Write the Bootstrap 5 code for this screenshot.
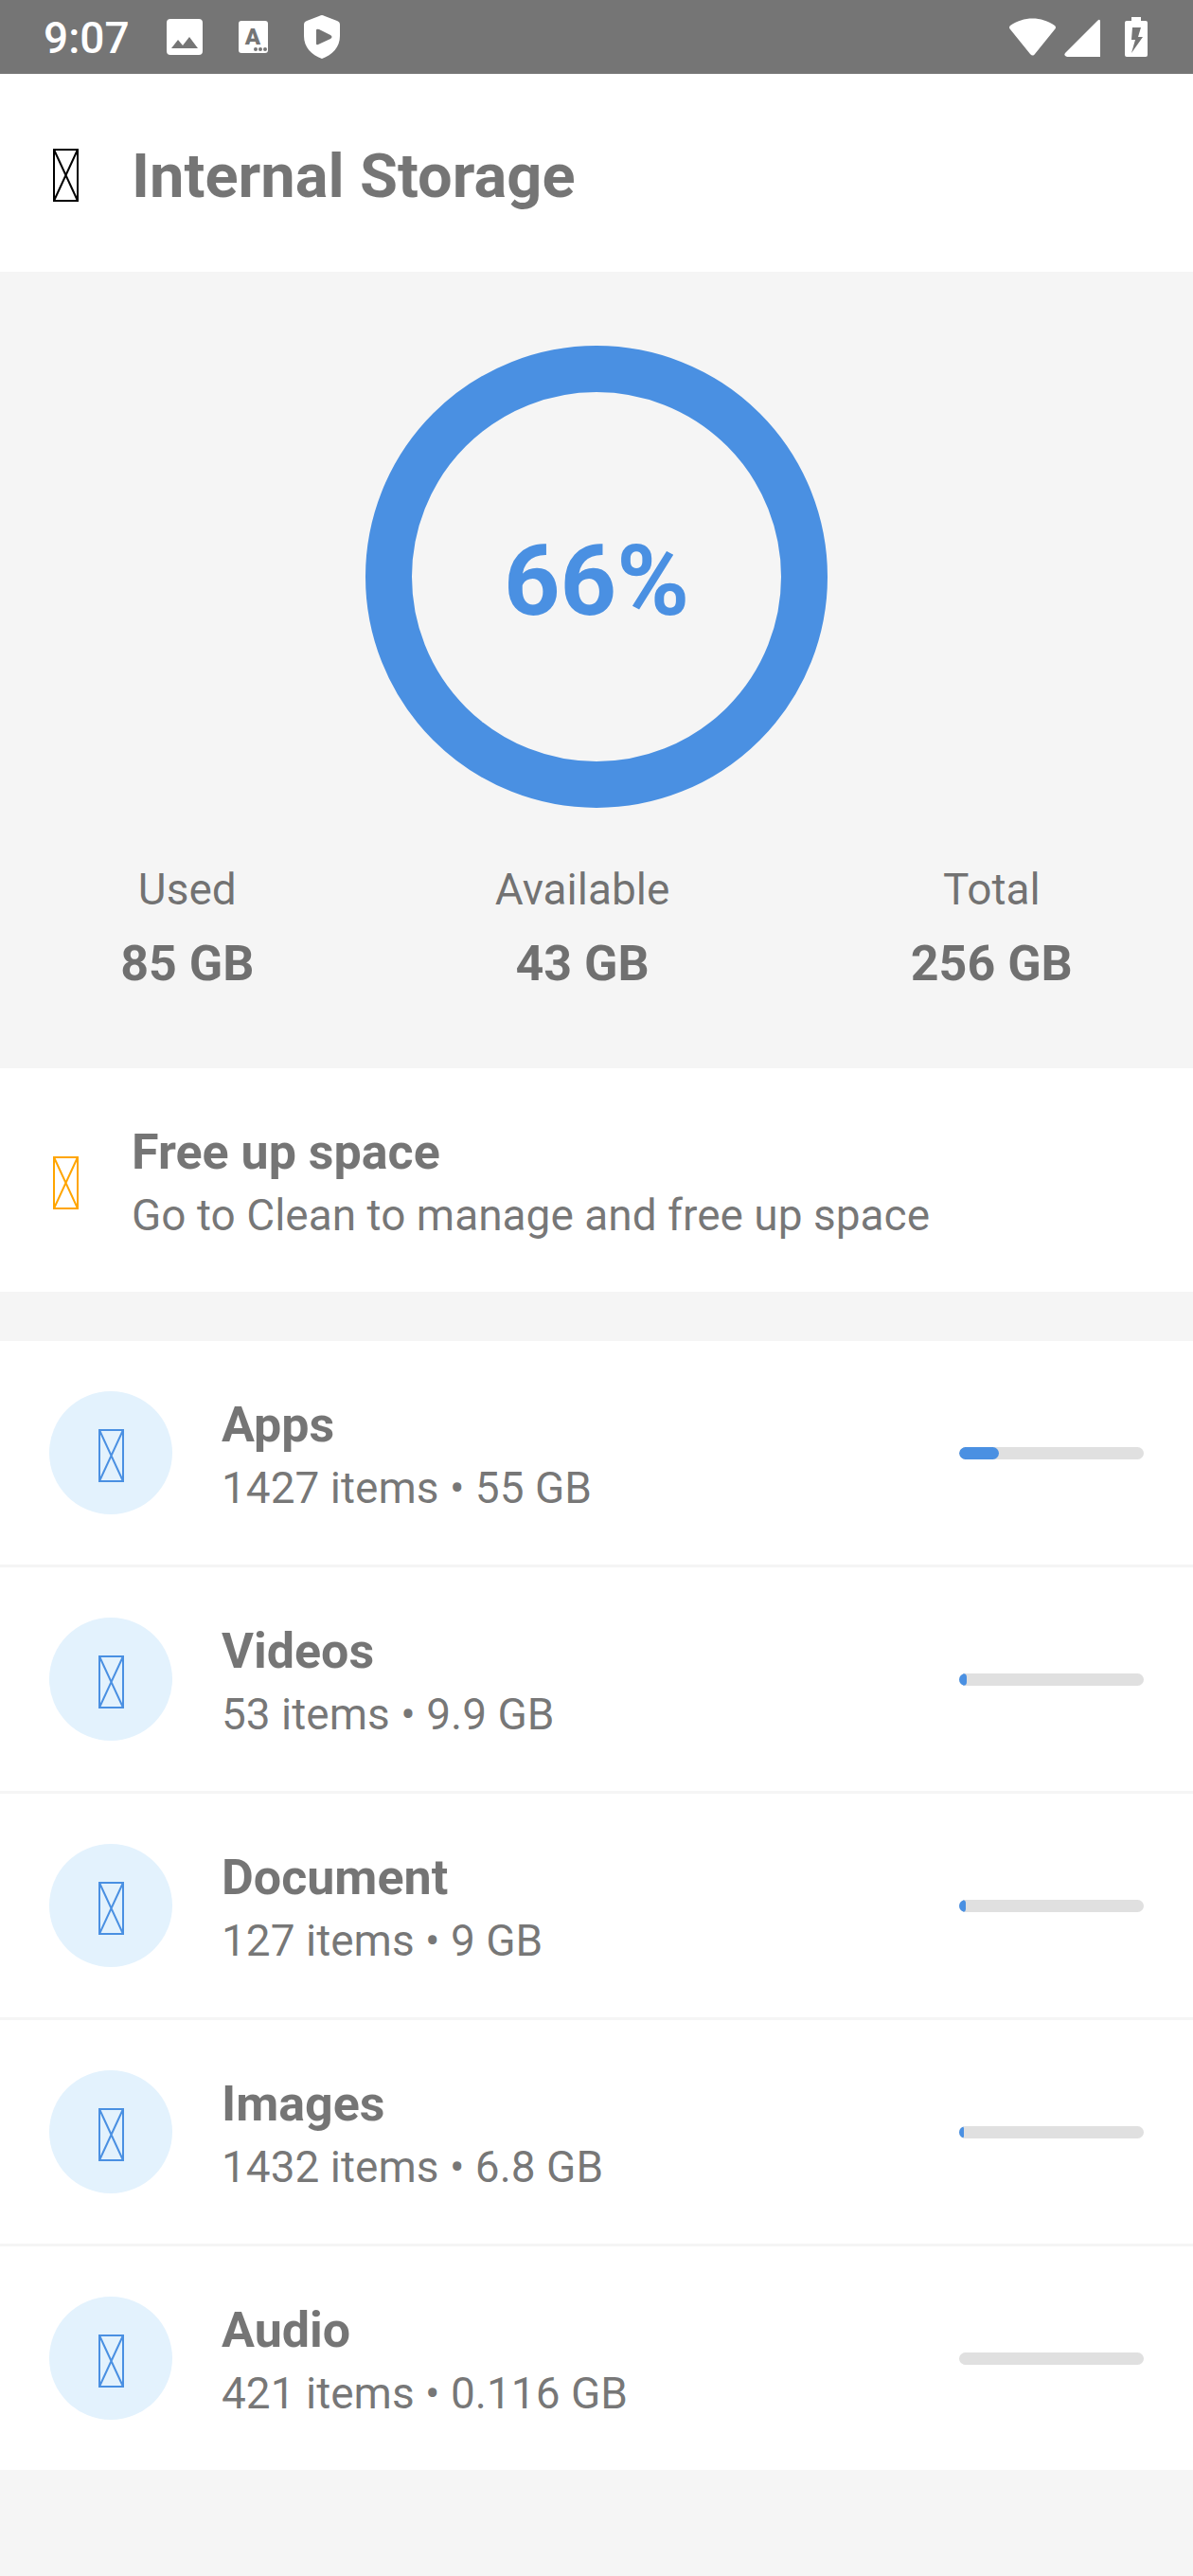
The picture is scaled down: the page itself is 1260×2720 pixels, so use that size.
<!DOCTYPE html>
<html lang="en">
<head>
<meta charset="utf-8">
<meta name="viewport" content="width=device-width, initial-scale=1">
<title>Internal Storage</title>
<link href="https://cdn.jsdelivr.net/npm/bootstrap@5.3.0/dist/css/bootstrap.min.css" rel="stylesheet">
<style>
  :root { --ink: rgba(0, 0, 0, .54); --accent: #4a90e2; --page: #f5f5f5; }
  body { background: var(--page); color: var(--ink); font-family: Roboto, "Liberation Sans", sans-serif; }
  svg { display: block; flex: none; }
  .status-bar { background: #757575; height: 78px; padding: 0 31px 0 46px; }
  .clock { font-size: 46px; line-height: 62px; padding: 2px 1px 0 0; }
  .status-left { gap: 38px; }
  .status-right { gap: 9px; }
  .app-header { padding: 54px 52px 50px; }
  .app-title { font-size: 65px; line-height: 101px; padding-top: 4px; }
  .icon-slot { width: 35px; margin-right: 52px; padding: 0 4px; }
  .back-button { color: #000; background: none; border: 0; }
  .summary { padding: 78px 0 75px; }
  .usage-ring { width: 488px; height: 488px; border: 49px solid var(--accent); color: var(--accent); margin-bottom: 55px; }
  .usage-value { font-size: 104px; line-height: 122px; padding-top: 9px; }
  .stat { gap: 13px; }
  .label-text { font-size: 46px; line-height: 62px; }
  .strong-text { font-size: 52px; line-height: 70px; }
  .entry { padding: 50px 52px; color: var(--ink); }
  .entry-text { padding-top: 4px; }
  .tip { color: var(--ink); margin-bottom: 52px; }
  .tip-icon { color: #ffa500; padding-top: 6px; }
  .category + .category { border-top: 3px solid var(--page); }
  .category-icon { width: 130px; height: 130px; margin-right: 52px; padding-top: 6px; background: #e3f2fd; color: var(--accent); }
  .meter { width: 195px; height: 13px; border-radius: 7px; background: #e0e0e0; }
  .meter .progress-bar { background: var(--accent); border-radius: 7px; }
</style>
</head>
<body>
<svg class="d-none" aria-hidden="true">
  <symbol id="glyph-box" viewBox="0 0 27 56">
    <path d="M1 1H26V55H1ZM1 1L26 55M26 1L1 55" fill="none" stroke="currentColor" stroke-width="2"/>
  </symbol>
</svg>

<div class="status-bar d-flex justify-content-between align-items-center text-white">
  <div class="status-left d-flex align-items-center">
    <span class="clock fw-medium">9:07</span>
    <svg width="38" height="38" viewBox="0 0 38 38" role="img" aria-label="Picture"><path fill="#fff" fill-rule="evenodd" d="M4 0H34Q38 0 38 4V34Q38 38 34 38H4Q0 38 0 34V4Q0 0 4 0ZM5 31H33L24 19L17 28L12 22Z"/></svg>
    <svg width="31" height="34" viewBox="0 0 31 34" role="img" aria-label="Text"><rect width="31" height="34" rx="3" fill="#fff"/><text x="15" y="25" text-anchor="middle" font-family="Roboto, sans-serif" font-size="24" font-weight="900" fill="#757575">A</text><g fill="#757575"><circle cx="18" cy="30" r="2"/><circle cx="23" cy="30" r="2"/><circle cx="28" cy="30" r="2"/></g></svg>
    <svg width="38" height="46" viewBox="0 0 38 46" role="img" aria-label="Protection"><path fill="#fff" fill-rule="evenodd" d="M19 0Q20 0 22 1L35 6Q38 7 38 10V22C38 34 30 42 19 46C8 42 0 34 0 22V10Q0 7 3 6L16 1Q18 0 19 0ZM13 16V30Q13 32 15 31L28 25Q31 23 28 21L16 15Q13 14 13 16Z"/></svg>
  </div>
  <div class="status-right d-flex align-items-center">
    <svg width="49" height="42" viewBox="0 0 49 42" role="img" aria-label="Wi-Fi"><path fill="#fff" d="M1 9C15 -1 34 -1 48 9Q50 11 48 13L27 39Q25 42 22 39L1 13Q-1 11 1 9Z"/></svg>
    <svg width="38" height="42" viewBox="0 0 38 42" role="img" aria-label="Signal"><path fill="#fff" d="M35 4Q38 1 38 5V42H3Q-1 41 1 38Z"/></svg>
    <svg width="58" height="42" viewBox="0 0 58 42" role="img" aria-label="Battery charging"><path fill="#fff" fill-rule="evenodd" d="M24 0H34V4H39Q41 4 41 6V40Q41 42 39 42H19Q17 42 17 40V6Q17 4 19 4H24ZM25 11L24 24H28L24 38L36 21H31L34 11Z"/></svg>
  </div>
</div>

<header class="app-header d-flex align-items-center bg-white">
  <button type="button" class="back-button icon-slot" aria-label="Back"><svg width="27" height="56"><use href="#glyph-box"/></svg></button>
  <h1 class="app-title fw-bold mb-0">Internal Storage</h1>
</header>

<main>
  <section class="summary">
    <div class="usage-ring rounded-circle d-flex align-items-center justify-content-center mx-auto">
      <span class="usage-value fw-bold">66%</span>
    </div>
    <div class="d-flex justify-content-around text-center">
      <div class="stat d-flex flex-column"><span class="label-text">Used</span><span class="strong-text fw-bold">85 GB</span></div>
      <div class="stat d-flex flex-column"><span class="label-text">Available</span><span class="strong-text fw-bold">43 GB</span></div>
      <div class="stat d-flex flex-column"><span class="label-text">Total</span><span class="strong-text fw-bold">256 GB</span></div>
    </div>
  </section>

  <a href="#clean" class="tip entry d-flex align-items-center bg-white text-decoration-none">
    <span class="icon-slot tip-icon"><svg width="27" height="56"><use href="#glyph-box"/></svg></span>
    <span class="entry-text d-flex flex-column"><span class="strong-text fw-bold">Free up space</span><span class="label-text">Go to Clean to manage and free up space</span></span>
  </a>

  <ul class="list-unstyled mb-0">
    <li class="category entry d-flex align-items-center bg-white">
      <span class="category-icon rounded-circle d-flex align-items-center justify-content-center"><svg width="27" height="56"><use href="#glyph-box"/></svg></span>
      <div class="entry-text flex-grow-1"><div class="strong-text fw-bold">Apps</div><div class="label-text">1427 items • 55 GB</div></div>
      <div class="meter progress" role="progressbar" aria-label="Apps" aria-valuenow="21" aria-valuemin="0" aria-valuemax="100"><div class="progress-bar" style="width: 21.48%"></div></div>
    </li>
    <li class="category entry d-flex align-items-center bg-white">
      <span class="category-icon rounded-circle d-flex align-items-center justify-content-center"><svg width="27" height="56"><use href="#glyph-box"/></svg></span>
      <div class="entry-text flex-grow-1"><div class="strong-text fw-bold">Videos</div><div class="label-text">53 items • 9.9 GB</div></div>
      <div class="meter progress" role="progressbar" aria-label="Videos" aria-valuenow="4" aria-valuemin="0" aria-valuemax="100"><div class="progress-bar" style="width: 3.87%"></div></div>
    </li>
    <li class="category entry d-flex align-items-center bg-white">
      <span class="category-icon rounded-circle d-flex align-items-center justify-content-center"><svg width="27" height="56"><use href="#glyph-box"/></svg></span>
      <div class="entry-text flex-grow-1"><div class="strong-text fw-bold">Document</div><div class="label-text">127 items • 9 GB</div></div>
      <div class="meter progress" role="progressbar" aria-label="Document" aria-valuenow="4" aria-valuemin="0" aria-valuemax="100"><div class="progress-bar" style="width: 3.52%"></div></div>
    </li>
    <li class="category entry d-flex align-items-center bg-white">
      <span class="category-icon rounded-circle d-flex align-items-center justify-content-center"><svg width="27" height="56"><use href="#glyph-box"/></svg></span>
      <div class="entry-text flex-grow-1"><div class="strong-text fw-bold">Images</div><div class="label-text">1432 items • 6.8 GB</div></div>
      <div class="meter progress" role="progressbar" aria-label="Images" aria-valuenow="3" aria-valuemin="0" aria-valuemax="100"><div class="progress-bar" style="width: 2.66%"></div></div>
    </li>
    <li class="category entry d-flex align-items-center bg-white">
      <span class="category-icon rounded-circle d-flex align-items-center justify-content-center"><svg width="27" height="56"><use href="#glyph-box"/></svg></span>
      <div class="entry-text flex-grow-1"><div class="strong-text fw-bold">Audio</div><div class="label-text">421 items • 0.116 GB</div></div>
      <div class="meter progress" role="progressbar" aria-label="Audio" aria-valuenow="0" aria-valuemin="0" aria-valuemax="100"><div class="progress-bar" style="width: 0%"></div></div>
    </li>
  </ul>
</main>
<script src="https://cdn.jsdelivr.net/npm/bootstrap@5.3.0/dist/js/bootstrap.bundle.min.js"></script>
</body>
</html>
